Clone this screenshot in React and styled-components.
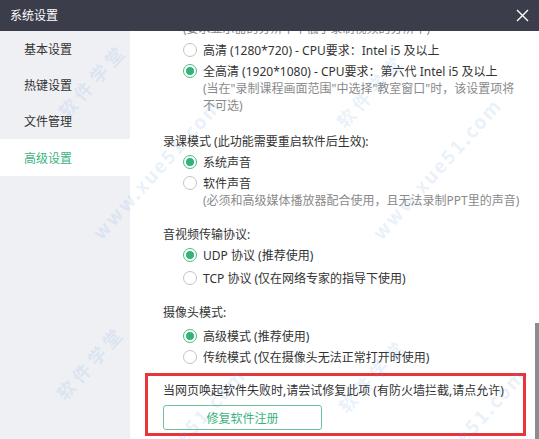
import React from 'react'
import styled, { createGlobalStyle } from 'styled-components'

const GlobalStyle = createGlobalStyle`
  html, body { margin: 0; padding: 0; background: #fff; }
  body {
    font-family: "Noto Sans", "Noto Sans CJK SC", sans-serif;
    font-size: 12px;
    color: #333;
  }
`;

const navItems = ['基本设置', '热键设置', '文件管理', '高级设置'];

const marks = [
  { text: '软件学堂', x: 92, y: 80, big: false },
  { text: '软件学堂', x: 370, y: 90, big: false },
  { text: '软件学堂', x: 90, y: 362, big: false },
  { text: '软件学堂', x: 372, y: 375, big: false },
  { text: 'www.xue51.com', x: 156, y: 168, big: true },
  { text: 'www.xue51.com', x: 436, y: 168, big: true },
  { text: 'www.xue51.com', x: 180, y: 438, big: true },
  { text: 'www.xue51.com', x: 460, y: 438, big: true },
];

const Radio = ({ checked }) => (
  <RadioDot $checked={checked}>{checked && <RadioInner />}</RadioDot>
);

const Option = ({ checked, mt, children }) => (
  <RadioRow $mt={mt}>
    <Radio checked={checked} />
    <span>{children}</span>
  </RadioRow>
);

const App = () => {
  return (
    <Window>
      <GlobalStyle />
      <TitleBar>
        <span>系统设置</span>
        <svg width="13" height="13" viewBox="0 0 13 13">
          <path d="M1 1 L12 12 M12 1 L1 12" stroke="#fff" strokeWidth="1.4" />
        </svg>
      </TitleBar>
      <Main>
        <Sidebar>
          {navItems.map((item, i) => (
            <NavItem key={item} $active={i === 3}>{item}</NavItem>
          ))}
        </Sidebar>
        <Content>
          <Scroller>
            <Lead>(要求显示器的分辨率不低于录制视频的分辨率)</Lead>
            <Option>高清 (1280*720) - CPU要求：Intel i5 及以上</Option>
            <Option checked>全高清 (1920*1080) - CPU要求：第六代 Intel i5 及以上</Option>
            <Note>
              (当在"录制课程画面范围"中选择"教室窗口"时，该设置项将<br />不可选)
            </Note>

            <Group $gap={18}>
              <Heading>录课模式 (此功能需要重启软件后生效):</Heading>
              <Option checked>系统声音</Option>
              <Option>软件声音</Option>
              <Note>(必须和高级媒体播放器配合使用，且无法录制PPT里的声音)</Note>
            </Group>

            <Group $gap={16}>
              <Heading>音视频传输协议:</Heading>
              <Option checked>UDP 协议 (推荐使用)</Option>
              <Option mt={2}>TCP 协议 (仅在网络专家的指导下使用)</Option>
            </Group>

            <Group $gap={15}>
              <Heading>摄像头模式:</Heading>
              <Option checked mt={3}>高级模式 (推荐使用)</Option>
              <Option>传统模式 (仅在摄像头无法正常打开时使用)</Option>
            </Group>

            <RepairBox>
              <RepairText>当网页唤起软件失败时,请尝试修复此项 (有防火墙拦截,请点允许)</RepairText>
              <RepairButton>修复软件注册</RepairButton>
            </RepairBox>
          </Scroller>
          <ScrollThumb />
        </Content>
      </Main>
      <Watermarks>
        {marks.map((m, i) => (
          <Mark key={i} $big={m.big} style={{ left: m.x, top: m.y }}>{m.text}</Mark>
        ))}
      </Watermarks>
    </Window>
  );
}

const Window = styled.div`
  position: relative;
  width: 539px;
  height: 439px;
  display: flex;
  flex-direction: column;
  overflow: hidden;
  background: #fff;
`;

const TitleBar = styled.div`
  height: 31px;
  flex-shrink: 0;
  background: #3b3d4b;
  color: #fff;
  display: flex;
  align-items: center;
  justify-content: space-between;
  padding: 0 10px 2px 10px;
  box-sizing: border-box;
  font-size: 12px;
  svg { margin-top: 2px; }
`;

const Main = styled.div`
  flex: 1;
  display: flex;
  min-height: 0;
`;

const Sidebar = styled.div`
  width: 130px;
  flex-shrink: 0;
  background: #eff0f4;
`;

const NavItem = styled.div`
  height: 36px;
  display: flex;
  align-items: center;
  padding-left: 24px;
  font-size: 12px;
  color: ${p => (p.$active ? '#3cb37e' : '#333')};
  background: ${p => (p.$active ? '#fff' : 'transparent')};
  &:last-child { height: 37px; }
`;

const Content = styled.div`
  position: relative;
  flex: 1;
  overflow: hidden;
`;

const Scroller = styled.div`
  margin-top: -12px;
  padding-left: 53px;
  display: flex;
  flex-direction: column;
  align-items: flex-start;
`;

const Lead = styled.div`
  line-height: 20px;
  color: #888;
`;

const RadioRow = styled.div`
  height: 21px;
  display: flex;
  align-items: center;
  gap: 6px;
  margin-top: ${p => p.$mt || 0}px;
  white-space: nowrap;
`;

const RadioDot = styled.span`
  width: 14px;
  height: 14px;
  box-sizing: border-box;
  border-radius: 50%;
  border: 1px solid ${p => (p.$checked ? '#4dba88' : '#c4c4c4')};
  background: #fff;
  display: flex;
  align-items: center;
  justify-content: center;
  flex-shrink: 0;
`;

const RadioInner = styled.span`
  width: 8px;
  height: 8px;
  border-radius: 50%;
  background: #33b27a;
`;

const Note = styled.div`
  margin-left: 20px;
  margin-top: -1px;
  line-height: 17px;
  color: #8a8a8a;
  white-space: nowrap;
`;

const Group = styled.div`
  margin-top: ${p => p.$gap}px;
  margin-left: -20px;
  display: flex;
  flex-direction: column;
  align-items: flex-start;
  & > ${RadioRow} { margin-left: 20px; }
  & > ${Note} { margin-left: 40px; }
`;

const Heading = styled.div`
  line-height: 19px;
  color: #333;
`;

const RepairBox = styled.div`
  margin-top: 6px;
  margin-left: -38px;
  width: 381px;
  height: 63px;
  box-sizing: border-box;
  border: 3px solid #e8353c;
  padding: 5px 0 0 15px;
  display: flex;
  flex-direction: column;
  align-items: flex-start;
`;

const RepairText = styled.div`
  line-height: 20px;
  white-space: nowrap;
`;

const RepairButton = styled.div`
  margin-top: 4px;
  width: 159px;
  height: 25px;
  box-sizing: border-box;
  border: 1px solid #6cc49a;
  border-radius: 3px;
  color: #3cb37e;
  display: flex;
  align-items: center;
  justify-content: center;
`;

const ScrollThumb = styled.div`
  position: absolute;
  right: 0;
  top: 292px;
  bottom: 0;
  width: 4px;
  background: #8c8d91;
`;

const Watermarks = styled.div`
  position: absolute;
  inset: 0;
  pointer-events: none;
  overflow: hidden;
`;

const Mark = styled.div`
  position: absolute;
  transform: translate(-50%, -50%) rotate(-48deg);
  white-space: nowrap;
  font-family: "Noto Sans CJK SC", "Noto Sans", sans-serif;
  font-weight: bold;
  font-size: ${p => (p.$big ? '19px' : '18px')};
  letter-spacing: ${p => (p.$big ? '2px' : '5px')};
  color: rgba(80, 150, 215, 0.14);
`;

export default App;
